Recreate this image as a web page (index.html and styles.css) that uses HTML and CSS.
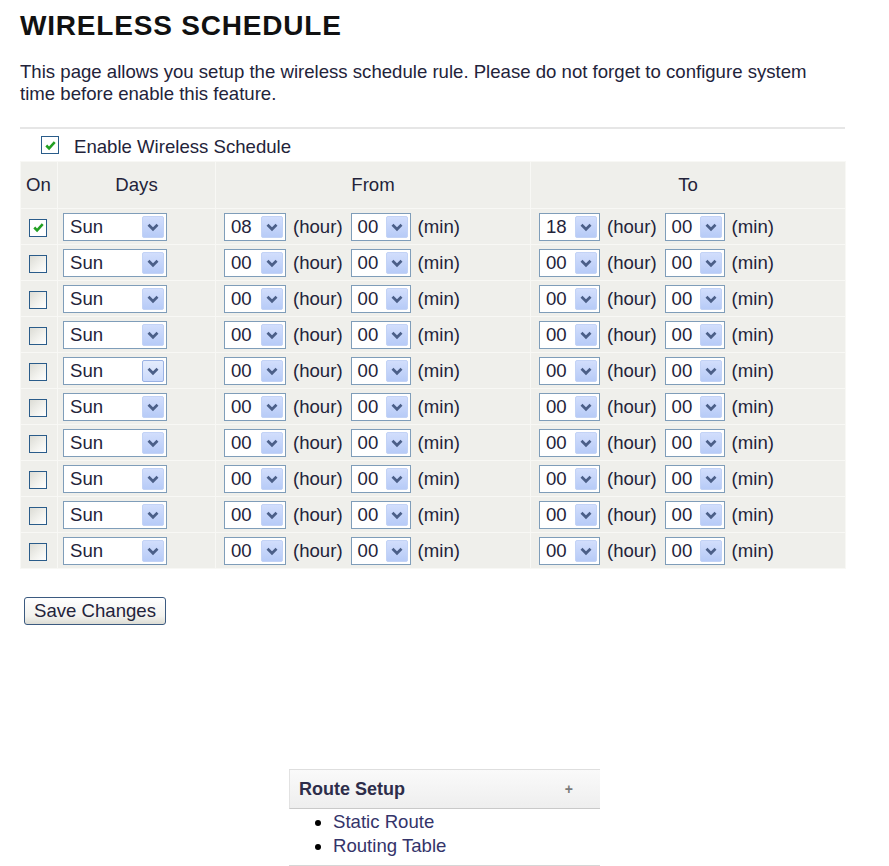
FILE: index.html
```html
<!DOCTYPE html>
<html>
<head>
<meta charset="utf-8">
<title>Wireless Schedule</title>
<link rel="stylesheet" href="styles.css">
</head>
<body>
<h1 class="title">WIRELESS SCHEDULE</h1>
<p class="intro">This page allows you setup the wireless schedule rule. Please do not forget to configure system time before enable this feature.</p>
<div class="rule"></div>
<div class="enable"><span class="cb on"><svg viewBox="0 0 16 16"><polyline points="3.5,8 6.5,11 12.5,4.5"/></svg></span><span class="enable-label">Enable Wireless Schedule</span></div>

<table class="sched">
<colgroup><col class="k-on"><col class="k-days"><col class="k-from"><col class="k-to"></colgroup>
<tr class="head"><th class="c-on">On</th><th class="c-days">Days</th><th class="c-from">From</th><th class="c-to">To</th></tr>
<tr>
<td class="c-on"><span class="cb on"><svg viewBox="0 0 16 16"><polyline points="3.5,8 6.5,11 12.5,4.5"/></svg></span></td>
<td class="c-days"><span class="sel w-day"><span class="val">Sun</span><span class="arr"><svg viewBox="0 0 20 20"><polyline points="5,7.5 10,12.5 15,7.5"/></svg></span></span></td>
<td class="c-from"><div class="time"><span class="sel w-h"><span class="val">08</span><span class="arr"><svg viewBox="0 0 20 20"><polyline points="5,7.5 10,12.5 15,7.5"/></svg></span></span><span class="unit">(hour)</span><span class="sel w-m"><span class="val">00</span><span class="arr"><svg viewBox="0 0 20 20"><polyline points="5,7.5 10,12.5 15,7.5"/></svg></span></span><span class="unit">(min)</span></div></td>
<td class="c-to"><div class="time"><span class="sel w-h2"><span class="val">18</span><span class="arr"><svg viewBox="0 0 20 20"><polyline points="5,7.5 10,12.5 15,7.5"/></svg></span></span><span class="unit">(hour)</span><span class="sel w-m"><span class="val">00</span><span class="arr"><svg viewBox="0 0 20 20"><polyline points="5,7.5 10,12.5 15,7.5"/></svg></span></span><span class="unit">(min)</span></div></td>
</tr>
<tr>
<td class="c-on"><span class="cb"></span></td>
<td class="c-days"><span class="sel w-day"><span class="val">Sun</span><span class="arr"><svg viewBox="0 0 20 20"><polyline points="5,7.5 10,12.5 15,7.5"/></svg></span></span></td>
<td class="c-from"><div class="time"><span class="sel w-h"><span class="val">00</span><span class="arr"><svg viewBox="0 0 20 20"><polyline points="5,7.5 10,12.5 15,7.5"/></svg></span></span><span class="unit">(hour)</span><span class="sel w-m"><span class="val">00</span><span class="arr"><svg viewBox="0 0 20 20"><polyline points="5,7.5 10,12.5 15,7.5"/></svg></span></span><span class="unit">(min)</span></div></td>
<td class="c-to"><div class="time"><span class="sel w-h2"><span class="val">00</span><span class="arr"><svg viewBox="0 0 20 20"><polyline points="5,7.5 10,12.5 15,7.5"/></svg></span></span><span class="unit">(hour)</span><span class="sel w-m"><span class="val">00</span><span class="arr"><svg viewBox="0 0 20 20"><polyline points="5,7.5 10,12.5 15,7.5"/></svg></span></span><span class="unit">(min)</span></div></td>
</tr>
<tr>
<td class="c-on"><span class="cb"></span></td>
<td class="c-days"><span class="sel w-day"><span class="val">Sun</span><span class="arr"><svg viewBox="0 0 20 20"><polyline points="5,7.5 10,12.5 15,7.5"/></svg></span></span></td>
<td class="c-from"><div class="time"><span class="sel w-h"><span class="val">00</span><span class="arr"><svg viewBox="0 0 20 20"><polyline points="5,7.5 10,12.5 15,7.5"/></svg></span></span><span class="unit">(hour)</span><span class="sel w-m"><span class="val">00</span><span class="arr"><svg viewBox="0 0 20 20"><polyline points="5,7.5 10,12.5 15,7.5"/></svg></span></span><span class="unit">(min)</span></div></td>
<td class="c-to"><div class="time"><span class="sel w-h2"><span class="val">00</span><span class="arr"><svg viewBox="0 0 20 20"><polyline points="5,7.5 10,12.5 15,7.5"/></svg></span></span><span class="unit">(hour)</span><span class="sel w-m"><span class="val">00</span><span class="arr"><svg viewBox="0 0 20 20"><polyline points="5,7.5 10,12.5 15,7.5"/></svg></span></span><span class="unit">(min)</span></div></td>
</tr>
<tr>
<td class="c-on"><span class="cb"></span></td>
<td class="c-days"><span class="sel w-day"><span class="val">Sun</span><span class="arr"><svg viewBox="0 0 20 20"><polyline points="5,7.5 10,12.5 15,7.5"/></svg></span></span></td>
<td class="c-from"><div class="time"><span class="sel w-h"><span class="val">00</span><span class="arr"><svg viewBox="0 0 20 20"><polyline points="5,7.5 10,12.5 15,7.5"/></svg></span></span><span class="unit">(hour)</span><span class="sel w-m"><span class="val">00</span><span class="arr"><svg viewBox="0 0 20 20"><polyline points="5,7.5 10,12.5 15,7.5"/></svg></span></span><span class="unit">(min)</span></div></td>
<td class="c-to"><div class="time"><span class="sel w-h2"><span class="val">00</span><span class="arr"><svg viewBox="0 0 20 20"><polyline points="5,7.5 10,12.5 15,7.5"/></svg></span></span><span class="unit">(hour)</span><span class="sel w-m"><span class="val">00</span><span class="arr"><svg viewBox="0 0 20 20"><polyline points="5,7.5 10,12.5 15,7.5"/></svg></span></span><span class="unit">(min)</span></div></td>
</tr>
<tr>
<td class="c-on"><span class="cb"></span></td>
<td class="c-days"><span class="sel w-day"><span class="val">Sun</span><span class="arr hover"><svg viewBox="0 0 20 20"><polyline points="5,7.5 10,12.5 15,7.5"/></svg></span></span></td>
<td class="c-from"><div class="time"><span class="sel w-h"><span class="val">00</span><span class="arr"><svg viewBox="0 0 20 20"><polyline points="5,7.5 10,12.5 15,7.5"/></svg></span></span><span class="unit">(hour)</span><span class="sel w-m"><span class="val">00</span><span class="arr"><svg viewBox="0 0 20 20"><polyline points="5,7.5 10,12.5 15,7.5"/></svg></span></span><span class="unit">(min)</span></div></td>
<td class="c-to"><div class="time"><span class="sel w-h2"><span class="val">00</span><span class="arr"><svg viewBox="0 0 20 20"><polyline points="5,7.5 10,12.5 15,7.5"/></svg></span></span><span class="unit">(hour)</span><span class="sel w-m"><span class="val">00</span><span class="arr"><svg viewBox="0 0 20 20"><polyline points="5,7.5 10,12.5 15,7.5"/></svg></span></span><span class="unit">(min)</span></div></td>
</tr>
<tr>
<td class="c-on"><span class="cb"></span></td>
<td class="c-days"><span class="sel w-day"><span class="val">Sun</span><span class="arr"><svg viewBox="0 0 20 20"><polyline points="5,7.5 10,12.5 15,7.5"/></svg></span></span></td>
<td class="c-from"><div class="time"><span class="sel w-h"><span class="val">00</span><span class="arr"><svg viewBox="0 0 20 20"><polyline points="5,7.5 10,12.5 15,7.5"/></svg></span></span><span class="unit">(hour)</span><span class="sel w-m"><span class="val">00</span><span class="arr"><svg viewBox="0 0 20 20"><polyline points="5,7.5 10,12.5 15,7.5"/></svg></span></span><span class="unit">(min)</span></div></td>
<td class="c-to"><div class="time"><span class="sel w-h2"><span class="val">00</span><span class="arr"><svg viewBox="0 0 20 20"><polyline points="5,7.5 10,12.5 15,7.5"/></svg></span></span><span class="unit">(hour)</span><span class="sel w-m"><span class="val">00</span><span class="arr"><svg viewBox="0 0 20 20"><polyline points="5,7.5 10,12.5 15,7.5"/></svg></span></span><span class="unit">(min)</span></div></td>
</tr>
<tr>
<td class="c-on"><span class="cb"></span></td>
<td class="c-days"><span class="sel w-day"><span class="val">Sun</span><span class="arr"><svg viewBox="0 0 20 20"><polyline points="5,7.5 10,12.5 15,7.5"/></svg></span></span></td>
<td class="c-from"><div class="time"><span class="sel w-h"><span class="val">00</span><span class="arr"><svg viewBox="0 0 20 20"><polyline points="5,7.5 10,12.5 15,7.5"/></svg></span></span><span class="unit">(hour)</span><span class="sel w-m"><span class="val">00</span><span class="arr"><svg viewBox="0 0 20 20"><polyline points="5,7.5 10,12.5 15,7.5"/></svg></span></span><span class="unit">(min)</span></div></td>
<td class="c-to"><div class="time"><span class="sel w-h2"><span class="val">00</span><span class="arr"><svg viewBox="0 0 20 20"><polyline points="5,7.5 10,12.5 15,7.5"/></svg></span></span><span class="unit">(hour)</span><span class="sel w-m"><span class="val">00</span><span class="arr"><svg viewBox="0 0 20 20"><polyline points="5,7.5 10,12.5 15,7.5"/></svg></span></span><span class="unit">(min)</span></div></td>
</tr>
<tr>
<td class="c-on"><span class="cb"></span></td>
<td class="c-days"><span class="sel w-day"><span class="val">Sun</span><span class="arr"><svg viewBox="0 0 20 20"><polyline points="5,7.5 10,12.5 15,7.5"/></svg></span></span></td>
<td class="c-from"><div class="time"><span class="sel w-h"><span class="val">00</span><span class="arr"><svg viewBox="0 0 20 20"><polyline points="5,7.5 10,12.5 15,7.5"/></svg></span></span><span class="unit">(hour)</span><span class="sel w-m"><span class="val">00</span><span class="arr"><svg viewBox="0 0 20 20"><polyline points="5,7.5 10,12.5 15,7.5"/></svg></span></span><span class="unit">(min)</span></div></td>
<td class="c-to"><div class="time"><span class="sel w-h2"><span class="val">00</span><span class="arr"><svg viewBox="0 0 20 20"><polyline points="5,7.5 10,12.5 15,7.5"/></svg></span></span><span class="unit">(hour)</span><span class="sel w-m"><span class="val">00</span><span class="arr"><svg viewBox="0 0 20 20"><polyline points="5,7.5 10,12.5 15,7.5"/></svg></span></span><span class="unit">(min)</span></div></td>
</tr>
<tr>
<td class="c-on"><span class="cb"></span></td>
<td class="c-days"><span class="sel w-day"><span class="val">Sun</span><span class="arr"><svg viewBox="0 0 20 20"><polyline points="5,7.5 10,12.5 15,7.5"/></svg></span></span></td>
<td class="c-from"><div class="time"><span class="sel w-h"><span class="val">00</span><span class="arr"><svg viewBox="0 0 20 20"><polyline points="5,7.5 10,12.5 15,7.5"/></svg></span></span><span class="unit">(hour)</span><span class="sel w-m"><span class="val">00</span><span class="arr"><svg viewBox="0 0 20 20"><polyline points="5,7.5 10,12.5 15,7.5"/></svg></span></span><span class="unit">(min)</span></div></td>
<td class="c-to"><div class="time"><span class="sel w-h2"><span class="val">00</span><span class="arr"><svg viewBox="0 0 20 20"><polyline points="5,7.5 10,12.5 15,7.5"/></svg></span></span><span class="unit">(hour)</span><span class="sel w-m"><span class="val">00</span><span class="arr"><svg viewBox="0 0 20 20"><polyline points="5,7.5 10,12.5 15,7.5"/></svg></span></span><span class="unit">(min)</span></div></td>
</tr>
<tr>
<td class="c-on"><span class="cb"></span></td>
<td class="c-days"><span class="sel w-day"><span class="val">Sun</span><span class="arr"><svg viewBox="0 0 20 20"><polyline points="5,7.5 10,12.5 15,7.5"/></svg></span></span></td>
<td class="c-from"><div class="time"><span class="sel w-h"><span class="val">00</span><span class="arr"><svg viewBox="0 0 20 20"><polyline points="5,7.5 10,12.5 15,7.5"/></svg></span></span><span class="unit">(hour)</span><span class="sel w-m"><span class="val">00</span><span class="arr"><svg viewBox="0 0 20 20"><polyline points="5,7.5 10,12.5 15,7.5"/></svg></span></span><span class="unit">(min)</span></div></td>
<td class="c-to"><div class="time"><span class="sel w-h2"><span class="val">00</span><span class="arr"><svg viewBox="0 0 20 20"><polyline points="5,7.5 10,12.5 15,7.5"/></svg></span></span><span class="unit">(hour)</span><span class="sel w-m"><span class="val">00</span><span class="arr"><svg viewBox="0 0 20 20"><polyline points="5,7.5 10,12.5 15,7.5"/></svg></span></span><span class="unit">(min)</span></div></td>
</tr>
</table>

<div class="actions"><button class="btn" type="button">Save Changes</button></div>

<div class="menu">
<div class="menu-head"><span class="menu-title">Route Setup</span><span class="menu-plus">+</span></div>
<ul class="menu-list">
<li>Static Route</li>
<li>Routing Table</li>
</ul>
</div>
</body>
</html>
```

FILE: styles.css
```css
html, body {
  margin: 0;
  padding: 0;
  background: #ffffff;
}
body {
  padding: 10px 20px 0 20px;
  font-family: "Liberation Sans", Arial, sans-serif;
  font-size: 18.6px;
  color: #23233a;
  width: 825px;
}
.title {
  margin: 0;
  font-size: 28px;
  line-height: 32px;
  font-weight: bold;
  letter-spacing: 0.8px;
  color: #111111;
}
.intro {
  margin: 19px 0 0 0;
  line-height: 22px;
  width: 805px;
}
.rule {
  margin-top: 22px;
  height: 2px;
  background: #e6e6e6;
}
.enable {
  display: flex;
  align-items: center;
  height: 32px;
  padding-left: 21px;
}
.enable-label {
  margin-left: 15px;
  padding-top: 3px;
}
.cb {
  display: inline-flex;
  align-items: center;
  justify-content: center;
  box-sizing: border-box;
  width: 18px;
  height: 18px;
  border: 1px solid #2a5c8a;
  background: linear-gradient(135deg, #dcdcd5 0%, #f3f3ef 60%, #ffffff 100%);
  vertical-align: middle;
}
.cb.on {
  background: #ffffff;
}
.cb svg {
  width: 15px;
  height: 15px;
  fill: none;
  stroke: #22a022;
  stroke-width: 2.8;
}
.sched {
  width: 825px;
  table-layout: fixed;
  border-collapse: collapse;
  background: #efefeb;
}
.k-on { width: 37px; }
.k-days { width: 158px; }
.k-from { width: 315px; }
.k-to { width: 315px; }
.sched th, .sched td {
  border: 1px solid #f8f8f5;
  padding: 0;
  font-weight: normal;
}
.sched th {
  height: 46px;
  text-align: center;
}
.sched th.c-on {
  text-align: left;
  padding-left: 5px;
}
.sched td {
  height: 35px;
}
.sched td.c-on { padding-left: 8px; }
.sched td.c-days { padding-left: 5px; }
.sched td.c-from, .sched td.c-to { padding-left: 8px; }
.time {
  display: flex;
  align-items: center;
  gap: 7px;
}
.unit {
  margin-right: 1px;
}
.sel {
  display: inline-flex;
  align-items: center;
  justify-content: space-between;
  box-sizing: border-box;
  height: 28px;
  border: 1px solid #7f9db9;
  background: #ffffff;
  padding: 0 2px 0 6px;
  vertical-align: middle;
  color: #23233a;
}
.w-day { width: 104px; }
.w-h { width: 62px; }
.w-h2 { width: 61px; }
.w-m { width: 60px; }
.arr {
  display: inline-flex;
  align-items: center;
  justify-content: center;
  box-sizing: border-box;
  width: 22px;
  height: 22px;
  border-radius: 2px;
  background: linear-gradient(180deg, #d2defc 0%, #b7cbf7 100%);
  border: 1px solid #c3d3f6;
}
.arr.hover {
  background: linear-gradient(180deg, #e4ecfd 0%, #cad9fb 100%);
  border-color: #9ab2e4;
}
.arr svg {
  width: 18px;
  height: 18px;
  fill: none;
  stroke: #4b5f88;
  stroke-width: 3;
}
.actions {
  margin-top: 28px;
  padding-left: 4px;
}
.btn {
  box-sizing: border-box;
  width: 142px;
  height: 28px;
  border: 1px solid #3b5a80;
  border-radius: 3px;
  background: linear-gradient(180deg, #ffffff 0%, #f2f2ee 70%, #dcdcd4 100%);
  font-family: "Liberation Sans", Arial, sans-serif;
  font-size: 18.6px;
  color: #23233a;
  padding: 0;
}
.menu {
  margin: 144px 0 0 269px;
  width: 311px;
  border-top: 1px solid #dedede;
  border-bottom: 2px solid #d6d6d6;
}
.menu-head {
  display: flex;
  align-items: center;
  justify-content: space-between;
  height: 38px;
  padding: 0 27px 0 9px;
  background: linear-gradient(180deg, #fafafa 0%, #eeeeee 100%);
  border-left: 1px solid #e2e2e2;
  border-bottom: 1px solid #c9c9c9;
}
.menu-title {
  font-weight: bold;
  font-size: 18px;
  color: #2d2d4a;
}
.menu-plus {
  font-size: 14px;
  color: #7a7a7a;
  font-weight: bold;
}
.menu-list {
  margin: 0;
  padding: 1px 0 7px 44px;
  list-style: disc;
  color: #34346a;
  line-height: 24px;
}
.menu-list li::marker {
  color: #000000;
}
```
